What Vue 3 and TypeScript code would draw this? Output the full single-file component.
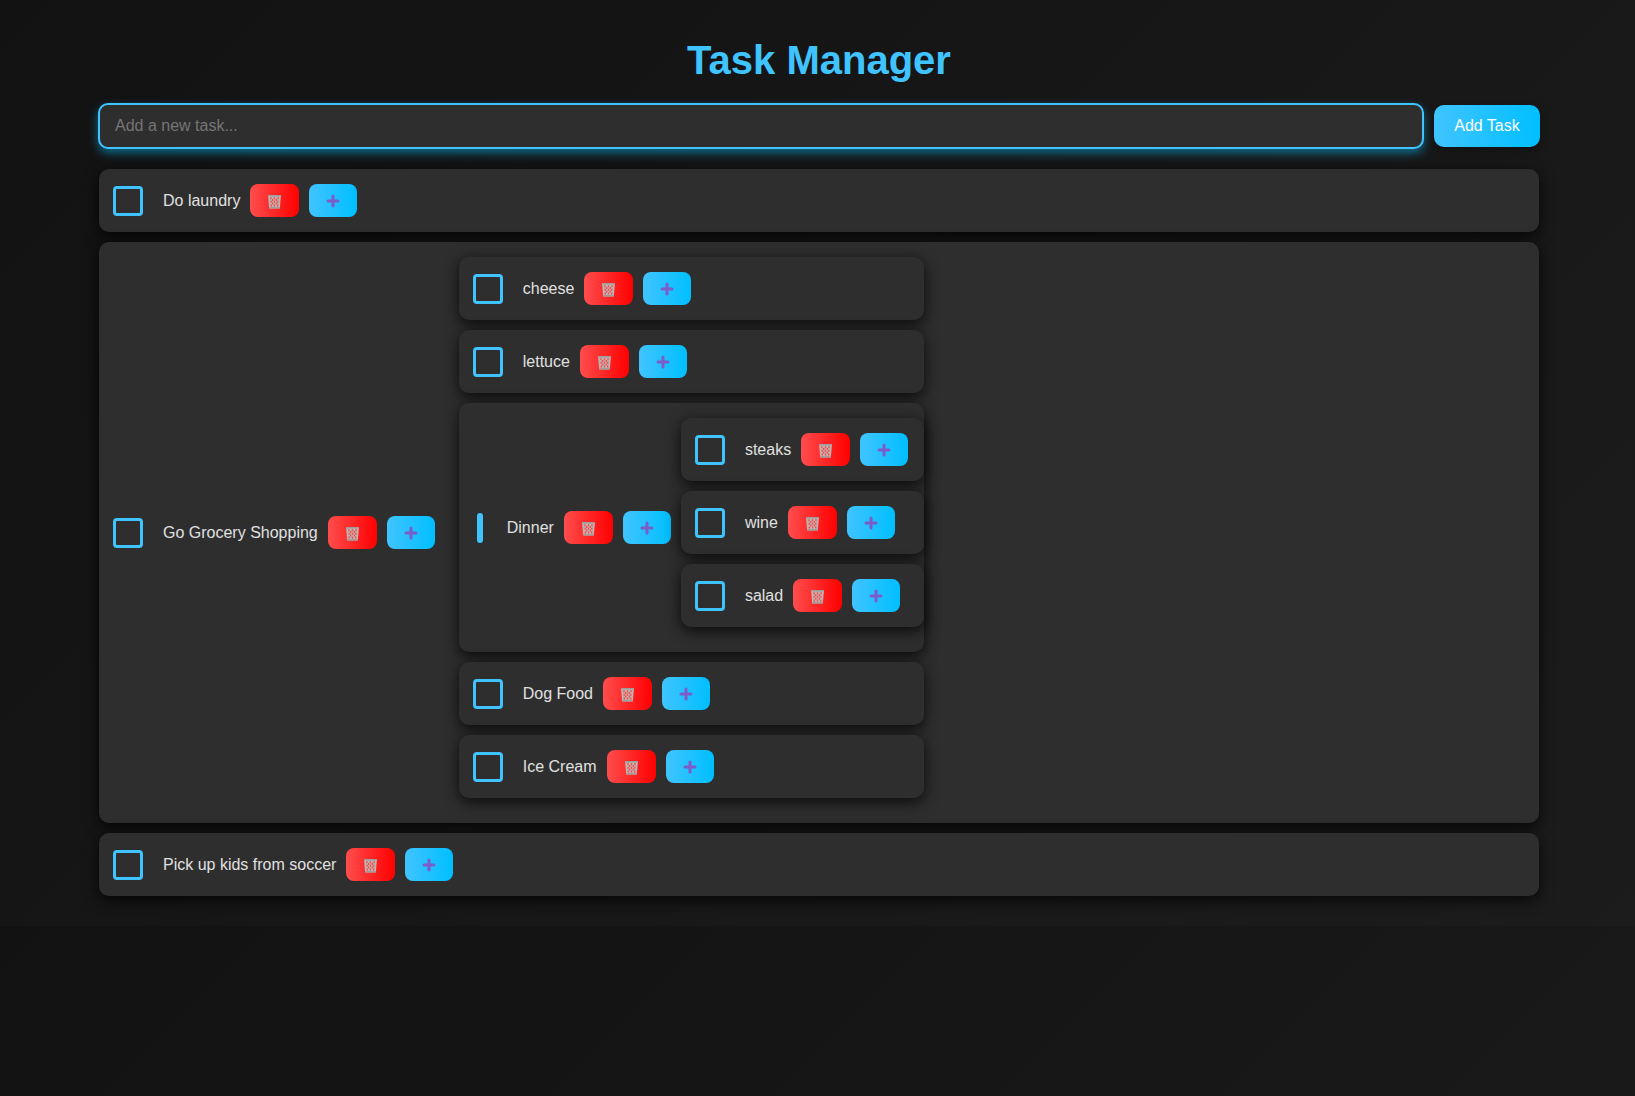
<script setup lang="ts">
import { defineComponent, h, ref, type VNode } from 'vue'

interface Task {
  id: number
  text: string
  done: boolean
  subtasks: Task[]
}

let nextId = 1
const make = (text: string, subtasks: Task[] = []): Task => ({ id: nextId++, text, done: false, subtasks })

const newTask = ref('')
const tasks = ref<Task[]>([
  make('Do laundry'),
  make('Go Grocery Shopping', [
    make('cheese'),
    make('lettuce'),
    make('Dinner', [make('steaks'), make('wine'), make('salad')]),
    make('Dog Food'),
    make('Ice Cream'),
  ]),
  make('Pick up kids from soccer'),
])

function addTask() {
  const text = newTask.value.trim()
  if (!text) return
  tasks.value.push(make(text))
  newTask.value = ''
}

const trashIcon = () =>
  h('svg', { width: 15, height: 15, viewBox: '0 0 15 15', 'aria-hidden': 'true' }, [
    h('path', { d: 'M1 1h13l-1.2 13.5H2.2z', fill: '#bcb4b2' }),
    h('path', {
      d: 'M4 3.2v2M7.5 3.2v2M11 3.2v2M5.7 5v2M9.3 5v2M4.2 6.8v2M7.5 6.8v2M10.8 6.8v2M5.7 8.6v2M9.3 8.6v2M4.3 10.4v2M7.5 10.4v2M10.7 10.4v2',
      fill: 'none', stroke: '#ff4545', 'stroke-width': 1.3,
    }),
    h('path', { d: 'M1 1.8h13M2.4 13.8h10.2', fill: 'none', stroke: '#a19c9b', 'stroke-width': 1.5 }),
  ])

const plusIcon = () =>
  h('svg', { width: 16, height: 16, viewBox: '0 0 16 16', 'aria-hidden': 'true' }, [
    h('path', { d: 'M8 3v10M3 8h10', stroke: '#7b5cc8', 'stroke-width': 3, 'stroke-linecap': 'round' }),
  ])

/* Renders one list of tasks and, inside each card, the list of its subtasks. */
const TaskList = defineComponent({
  props: { items: { type: Array as () => Task[], required: true }, level: { type: Number, default: 0 } },
  setup(props) {
    return (): VNode =>
      h('ul', { class: ['task-list', `level-${props.level}`] },
        props.items.map((task) =>
          h('li', { key: task.id, class: ['card', { narrow: props.level > 0 && task.subtasks.length > 0 }] }, [
            h('input', {
              id: `task-${task.id}`, type: 'checkbox', class: 'check', checked: task.done,
              onChange: () => { task.done = !task.done },
            }),
            h('label', { for: `task-${task.id}`, class: ['name', { done: task.done }] }, task.text),
            h('button', {
              type: 'button', class: 'icon-button remove', 'aria-label': `Delete ${task.text}`,
              onClick: () => { props.items.splice(props.items.indexOf(task), 1) },
            }, [trashIcon()]),
            h('button', {
              type: 'button', class: 'icon-button add', 'aria-label': `Add subtask to ${task.text}`,
              onClick: () => { task.subtasks.push(make('New subtask')) },
            }, [plusIcon()]),
            task.subtasks.length ? h(TaskList, { items: task.subtasks, level: props.level + 1 }) : null,
          ]),
        ),
      )
  },
})
</script>

<template>
  <main class="page">
    <h1>Task Manager</h1>
    <form class="entry" @submit.prevent="addTask">
      <input v-model="newTask" class="entry-text" type="text" placeholder="Add a new task..." aria-label="New task" />
      <button class="entry-button" type="submit">Add Task</button>
    </form>
    <TaskList :items="tasks" />
  </main>
</template>

<style>
body {
  margin: 0;
  background: linear-gradient(135deg, #121212, #1c1c1c);
}
</style>

<style scoped>
.page {
  padding: 37px 95px 30px 98px;
  color: #e0e0e0;
  font-family: "Liberation Sans", Arial, sans-serif;
  font-size: 16px;
  line-height: 18px;
}
h1 {
  margin: 0 0 19px;
  color: #40c4ff;
  font-size: 40px;
  line-height: 47px;
  text-align: center;
}
.entry {
  display: flex;
  align-items: center;
  gap: 10px;
  margin-bottom: 20px;
}
.entry-text {
  flex: 1;
  min-width: 0;
  height: 46px;
  box-sizing: border-box;
  padding: 0 15px;
  border: 2px solid #40c4ff;
  border-radius: 10px;
  outline: none;
  background: #2e2e2e;
  color: #e0e0e0;
  font: inherit;
  box-shadow: 0 4px 10px rgba(0, 191, 255, 0.5);
}
.entry-text::placeholder {
  color: #757575;
}
.entry-button {
  width: 106px;
  height: 42px;
  padding: 0;
  border: none;
  border-radius: 10px;
  background: linear-gradient(90deg, #40c4ff, #00bfff);
  color: #fff;
  font: inherit;
  cursor: pointer;
  box-shadow: 0 4px 8px rgba(0, 0, 0, 0.3);
}
.page :deep(.task-list) {
  display: flex;
  flex-direction: column;
  gap: 10px;
  margin: 0;
  padding: 0;
  list-style: none;
}
.page :deep(.level-0) {
  margin: 0 1px;
}
.page :deep(.level-1) {
  margin: 0 0 10px 14px;
}
.page :deep(.level-2) {
  margin-bottom: 10px;
}
.page :deep(.card) {
  display: flex;
  align-items: center;
  gap: 10px;
  padding: 15px 16px 15px 14px;
  border-radius: 10px;
  background: #2e2e2e;
  box-shadow: 0 4px 15px rgba(0, 0, 0, 0.8);
}
.page :deep(.card.narrow) {
  padding-right: 0;
}
.page :deep(.check) {
  appearance: none;
  flex: none;
  width: 30px;
  height: 30px;
  box-sizing: border-box;
  margin: 0 10px 0 0;
  border: 3px solid #40c4ff;
  border-radius: 4px;
  cursor: pointer;
}
.page :deep(.check:checked) {
  background: #40c4ff;
}
.page :deep(.narrow > .check) {
  width: 6px;
  margin: 0 14px 0 4px;
}
.page :deep(.name) {
  white-space: nowrap;
}
.page :deep(.name.done) {
  text-decoration: line-through;
}
.page :deep(.icon-button) {
  display: flex;
  align-items: center;
  justify-content: center;
  flex: none;
  width: 48px;
  height: 33px;
  padding: 1px 0 0;
  border: none;
  border-radius: 8px;
  cursor: pointer;
}
.page :deep(.remove) {
  width: 49px;
  background: linear-gradient(90deg, #ff4d4d, #ff0000);
}
.page :deep(.add) {
  background: linear-gradient(90deg, #40c4ff, #00bfff);
}
</style>
